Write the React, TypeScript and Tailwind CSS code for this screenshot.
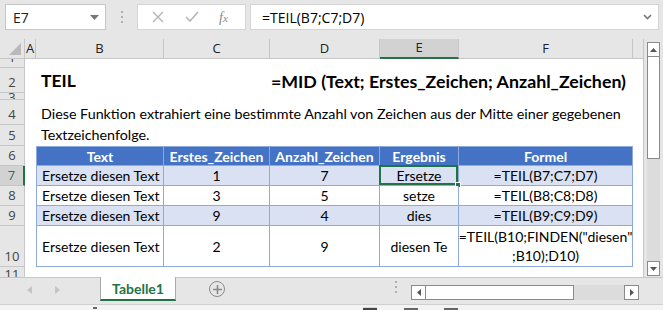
import React from "react";

const FONT = { fontFamily: "Lato, 'Open Sans', sans-serif" };
const UI = { fontFamily: "'Open Sans', 'Noto Sans', sans-serif" };

function RowHead({ n, row, sel, label }: { n: string; row: string; sel?: boolean; label?: string }) {
  return (
    <div
      className={`${row} col-start-1 flex items-end justify-center overflow-hidden border-b border-r border-[#c6c6c6] text-[13px] leading-[18px] ${
        sel ? "bg-[#d2d2d2] border-r-2 border-r-[#217346] text-[#217346]" : "bg-[#e6e6e6] text-[#444]"
      } ${label ?? ""}`}
      style={UI}
    >
      <span className="pb-[1px]">{n}</span>
    </div>
  );
}

export default function App() {
  const rows = [
    { b: "Ersetze diesen Text", c: "1", d: "7", e: "Ersetze", f: "=TEIL(B7;C7;D7)", bg: "bg-[#d9e1f2]", r: "row-start-8" },
    { b: "Ersetze diesen Text", c: "3", d: "5", e: "setze", f: "=TEIL(B8;C8;D8)", bg: "bg-white", r: "row-start-9" },
    { b: "Ersetze diesen Text", c: "9", d: "4", e: "dies", f: "=TEIL(B9;C9;D9)", bg: "bg-[#d9e1f2]", r: "row-start-10" },
  ];
  const cell = "border-r border-b border-[#8ea9db] flex items-center text-[14px] text-black";
  return (
    <div className="w-[663px] h-[310px] overflow-hidden bg-[#e6e6e6] flex flex-col" style={FONT}>
      {/* formula bar */}
      <div className="h-[39px] flex items-start pt-[4px] pl-[5px] shrink-0">
        <div className="w-[101px] h-[26px] bg-white border border-[#c6c6c6] flex items-center pl-[7px] pr-[6px] justify-between" style={UI}>
          <span className="text-[14px] text-[#222]">E7</span>
          <svg width="9" height="5" viewBox="0 0 9 5"><path d="M0 0h9L4.5 5z" fill="#777" /></svg>
        </div>
        <div className="w-[31px] h-[26px] flex flex-col items-center justify-center gap-[3px]">
          <div className="w-[2px] h-[2px] bg-[#b0b0b0]" />
          <div className="w-[2px] h-[2px] bg-[#b0b0b0]" />
          <div className="w-[2px] h-[2px] bg-[#b0b0b0]" />
        </div>
        <div className="w-[109px] h-[26px] bg-white border border-[#d4d4d4] flex items-center">
          <svg className="ml-[14px]" width="12" height="12" viewBox="0 0 12 12"><path d="M1 1l10 10M11 1L1 11" stroke="#b5b5b5" strokeWidth="1.4" /></svg>
          <svg className="ml-[21px]" width="14" height="12" viewBox="0 0 14 12"><path d="M1 6l4 4 8-9" stroke="#b5b5b5" strokeWidth="1.6" fill="none" /></svg>
          <span className="ml-[20px] text-[14px] italic text-[#8a8a8a]" style={{ fontFamily: "'Liberation Serif', serif" }}>f<span className="text-[11px]">x</span></span>
        </div>
        <div className="ml-[4px] w-[409px] h-[26px] bg-white border border-[#d4d4d4] flex items-center pl-[11px] pr-[6px] justify-between" style={UI}>
          <span className="text-[14px] text-black">=TEIL(B7;C7;D7)</span>
          <svg width="9" height="6" viewBox="0 0 9 6"><path d="M1 1l3.5 3.5L8 1" stroke="#777" strokeWidth="1.6" fill="none" /></svg>
        </div>
      </div>

      <div className="flex h-[238px] shrink-0">
        {/* sheet */}
        <div className="w-[643px] bg-white grid grid-cols-[25px_11px_128px_106px_110px_79px_174px_10px] grid-rows-[20px_9px_25px_7px_25px_21px_20px_20px_20px_20px_41px_10px]">
          {/* corner */}
          <div className="row-start-1 col-start-1 bg-[#e6e6e6] border-r border-b border-[#c6c6c6] relative">
            <svg className="absolute right-[3px] bottom-[3px]" width="12" height="12" viewBox="0 0 12 12"><path d="M12 0v12H0z" fill="#b9b9b9" /></svg>
          </div>
          {[
            ["A", "col-start-2", false],
            ["B", "col-start-3", false],
            ["C", "col-start-4", false],
            ["D", "col-start-5", false],
            ["E", "col-start-6", true],
            ["F", "col-start-7", false],
          ].map(([l, c, s]) => (
            <div
              key={l as string}
              className={`row-start-1 ${c} flex items-center justify-center text-[13px] text-[#222] border-r border-[#c6c6c6] ${
                s ? "bg-[#d2d2d2] border-b-2 border-b-[#217346]" : "bg-[#e6e6e6] border-b border-b-[#c6c6c6]"
              }`}
              style={UI}
            >
              {l as string}
            </div>
          ))}
          <div className="row-start-1 col-start-8 bg-[#e6e6e6] border-b border-[#c6c6c6]" />

          {/* row headers */}
          <RowHead n="1" row="row-start-2" />
          <RowHead n="2" row="row-start-3" />
          <div className="row-start-4 col-start-1 flex justify-center overflow-hidden border-b border-r border-[#c6c6c6] bg-[#e6e6e6] text-[13px] leading-[14px] text-[#444]" style={UI}>
            <span className="-mt-[3px]">3</span>
          </div>
          <RowHead n="4" row="row-start-5" />
          <RowHead n="5" row="row-start-6" />
          <RowHead n="6" row="row-start-7" />
          <RowHead n="7" row="row-start-8" sel />
          <RowHead n="8" row="row-start-9" />
          <RowHead n="9" row="row-start-10" />
          <RowHead n="10" row="row-start-11" />
          <div className="row-start-12 col-start-1 flex justify-center overflow-hidden border-r border-[#c6c6c6] bg-[#e6e6e6] text-[13px] leading-[14px] text-[#444]" style={UI}>
            <span>11</span>
          </div>

          {/* title row */}
          <div className="row-start-3 col-start-3 col-span-2 flex items-center pl-[5px] pt-[2px] text-[17.5px] font-bold text-black">TEIL</div>
          <div className="row-start-3 col-start-5 col-span-3 flex items-center justify-end pr-[7px] pt-[2px] text-[17.8px] font-bold text-black whitespace-nowrap">
            =MID (Text; Erstes_Zeichen; Anzahl_Zeichen)
          </div>

          {/* description */}
          <div className="row-start-5 col-start-3 col-span-5 flex items-end pl-[5px] pb-[1px] text-[14.3px] text-black whitespace-nowrap">
            Diese Funktion extrahiert eine bestimmte Anzahl von Zeichen aus der Mitte einer gegebenen
          </div>
          <div className="row-start-6 col-start-3 col-span-5 flex items-end pl-[5px] pb-[1px] text-[14.3px] text-black whitespace-nowrap">
            Textzeichenfolge.
          </div>

          {/* table header */}
          {[
            ["Text", "col-start-3 border-l"],
            ["Erstes_Zeichen", "col-start-4"],
            ["Anzahl_Zeichen", "col-start-5"],
            ["Ergebnis", "col-start-6"],
            ["Formel", "col-start-7"],
          ].map(([t, c]) => (
            <div key={t} className={`row-start-7 ${c} border-t border-r border-b border-[#8ea9db] bg-[#4472c4] flex items-center justify-center text-[14px] font-bold text-white`}>
              {t}
            </div>
          ))}

          {rows.map((r) => (
            <React.Fragment key={r.r}>
              <div className={`${r.r} col-start-3 border-l ${cell} ${r.bg} pl-[5px]`}>{r.b}</div>
              <div className={`${r.r} col-start-4 ${cell} ${r.bg} justify-center`}>{r.c}</div>
              <div className={`${r.r} col-start-5 ${cell} ${r.bg} justify-center`}>{r.d}</div>
              <div className={`${r.r} col-start-6 ${cell} ${r.bg} justify-center relative`}>
                {r.e}
                {r.r === "row-start-8" && (
                  <>
                    <div className="absolute -left-[1px] -top-[1px] right-0 bottom-0 border-2 border-[#217346]" />
                    <div className="absolute -right-[3px] -bottom-[3px] w-[6px] h-[6px] bg-[#217346] border border-white" />
                  </>
                )}
              </div>
              <div className={`${r.r} col-start-7 ${cell} ${r.bg} justify-center`}>{r.f}</div>
            </React.Fragment>
          ))}
          <div className={`row-start-11 col-start-3 border-l ${cell} bg-white pl-[5px]`}>Ersetze diesen Text</div>
          <div className={`row-start-11 col-start-4 ${cell} bg-white justify-center`}>2</div>
          <div className={`row-start-11 col-start-5 ${cell} bg-white justify-center`}>9</div>
          <div className={`row-start-11 col-start-6 ${cell} bg-white justify-center`}>diesen Te</div>
          <div className={`row-start-11 col-start-7 ${cell} bg-white justify-center text-center leading-[19px] whitespace-nowrap`}>
            <span>
              =TEIL(B10;FINDEN("diesen"
              <br />
              ;B10);D10)
            </span>
          </div>
        </div>

        {/* vertical scrollbar */}
        <div className="w-[20px] flex flex-col items-center pt-[3px] border-l border-[#c6c6c6]">
          <div className="w-[13px] h-[15px] bg-white border border-[#8a8a8a] flex items-center justify-center">
            <svg width="7" height="4" viewBox="0 0 7 4"><path d="M0 4h7L3.5 0z" fill="#555" /></svg>
          </div>
          <div className="w-[13px] h-[103px] bg-white border border-[#8a8a8a] -mt-px" />
          <div className="w-[13px] flex-1 bg-[#dcdcdc]" />
          <div className="w-[13px] h-[15px] bg-white border border-[#8a8a8a] flex items-center justify-center mb-[1px]">
            <svg width="7" height="4" viewBox="0 0 7 4"><path d="M0 0h7L3.5 4z" fill="#555" /></svg>
          </div>
        </div>
      </div>

      {/* sheet tabs */}
      <div className="h-[27px] flex items-start border-t border-[#c6c6c6] shrink-0">
        <div className="w-[100px] h-[24px] flex items-center">
          <svg className="ml-[27px]" width="5" height="8" viewBox="0 0 5 8"><path d="M5 0v8L0 4z" fill="#c4c4c4" /></svg>
          <svg className="ml-[23px]" width="5" height="8" viewBox="0 0 5 8"><path d="M0 0v8l5-4z" fill="#c4c4c4" /></svg>
        </div>
        <div className="-mt-px w-[76px] h-[24px] bg-white border-x border-[#ababab] border-b-2 border-b-[#217346] flex items-center justify-center text-[14px] font-bold text-[#217346]">
          Tabelle1
        </div>
        <div className="ml-[33px] mt-[3px] w-[16px] h-[16px] rounded-full border-[1.5px] border-[#8a8a8a] flex items-center justify-center">
          <svg width="9" height="9" viewBox="0 0 9 9"><path d="M4.5 0v9M0 4.5h9" stroke="#8a8a8a" strokeWidth="1.6" /></svg>
        </div>
        <div className="ml-[170px] mt-[3px] flex flex-col gap-[3px]">
          <div className="w-[2px] h-[2px] bg-[#b0b0b0]" />
          <div className="w-[2px] h-[2px] bg-[#b0b0b0]" />
          <div className="w-[2px] h-[2px] bg-[#b0b0b0]" />
        </div>
        <div className="ml-[14px] mt-[7px] h-[15px] w-[228px] flex">
          <div className="w-[15px] h-[15px] bg-white border border-[#8a8a8a] flex items-center justify-center">
            <svg width="4" height="7" viewBox="0 0 4 7"><path d="M4 0v7L0 3.5z" fill="#555" /></svg>
          </div>
          <div className="w-[149px] h-[15px] bg-white border border-[#8a8a8a] -ml-px" />
          <div className="flex-1 h-[15px] bg-[#dcdcdc]" />
          <div className="w-[15px] h-[15px] bg-white border border-[#8a8a8a] flex items-center justify-center">
            <svg width="4" height="7" viewBox="0 0 4 7"><path d="M0 0v7l4-3.5z" fill="#555" /></svg>
          </div>
        </div>
      </div>
      {/* status bar */}
      <div className="flex-1 bg-[#f3f3f3] border-t border-[#d0d0d0] relative">
        <div className="absolute left-[363px] top-[2px] w-[14px] h-[4px] bg-[#d6d6d6]" />
        <div className="absolute left-[363px] top-[3px] w-[14px] h-[3px] bg-[#444]" />
        <div className="absolute left-[404px] top-[3px] w-[14px] h-[3px] bg-[#666]" />
        <div className="absolute left-[444px] top-[3px] w-[14px] h-[3px] bg-[#666]" />
        <div className="absolute left-[93px] top-[2px] w-[4px] h-[2px] bg-[#666]" />
      </div>
    </div>
  );
}
